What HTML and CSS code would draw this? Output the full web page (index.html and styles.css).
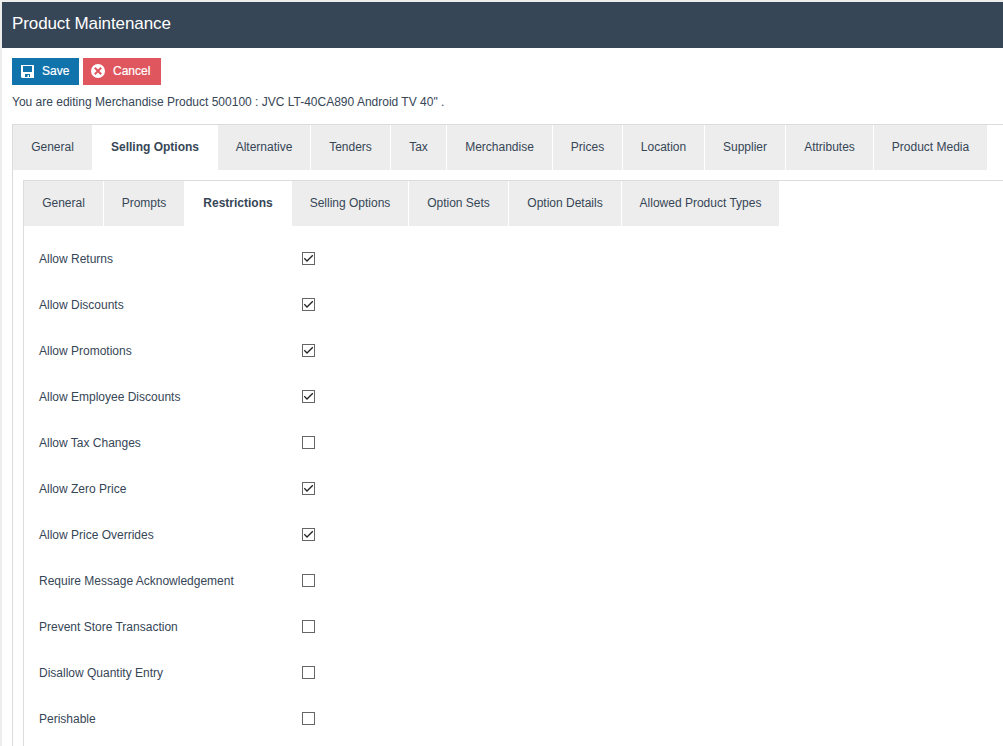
FILE: index.html
```html
<!DOCTYPE html>
<html lang="en">
<head>
<meta charset="utf-8">
<title>Product Maintenance</title>
<link rel="stylesheet" href="styles.css">
</head>
<body>
<div class="page">
  <header class="header"><h1 class="title">Product Maintenance</h1></header>
  <main class="content">
    <div class="actions">
      <button class="btn btn-save" type="button">
        <svg width="13" height="13" viewBox="0 0 13 13"><path fill="#fff" fill-rule="evenodd" d="M0 0H13V13H1L0 12ZM2 1V7H11V1ZM4 9V12H9V9Z"/><path fill="#fff" d="M6.500 10H8V12H6.500Z"/></svg>
        <span class="save-label">Save</span>
      </button>
      <button class="btn btn-cancel" type="button">
        <svg class="cancel-icon" width="14" height="14" viewBox="0 0 14 14"><circle cx="7" cy="7" r="7" fill="#fff"/><path d="M3.800 3.800L10.200 10.200M10.200 3.800L3.800 10.200" stroke="#e0565e" stroke-width="2"/></svg>
        <span class="cancel-label">Cancel</span>
      </button>
    </div>
    <p class="status">You are editing Merchandise Product 500100 : JVC LT-40CA890 Android TV 40" .</p>
    <section class="panel panel-outer">
      <nav class="tabs tabs-main">
        <a class="tab">General</a><a class="tab active">Selling Options</a><a class="tab">Alternative</a><a class="tab">Tenders</a><a class="tab">Tax</a><a class="tab">Merchandise</a><a class="tab">Prices</a><a class="tab">Location</a><a class="tab">Supplier</a><a class="tab">Attributes</a><a class="tab">Product Media</a>
      </nav>
      <section class="panel panel-inner">
        <nav class="tabs tabs-sub">
          <a class="tab">General</a><a class="tab">Prompts</a><a class="tab active">Restrictions</a><a class="tab">Selling Options</a><a class="tab">Option Sets</a><a class="tab">Option Details</a><a class="tab">Allowed Product Types</a>
        </nav>
        <form class="options">
          <label class="row"><span class="name">Allow Returns</span><input class="check" type="checkbox" checked></label>
          <label class="row"><span class="name">Allow Discounts</span><input class="check" type="checkbox" checked></label>
          <label class="row"><span class="name">Allow Promotions</span><input class="check" type="checkbox" checked></label>
          <label class="row"><span class="name">Allow Employee Discounts</span><input class="check" type="checkbox" checked></label>
          <label class="row"><span class="name">Allow Tax Changes</span><input class="check" type="checkbox"></label>
          <label class="row"><span class="name">Allow Zero Price</span><input class="check" type="checkbox" checked></label>
          <label class="row"><span class="name">Allow Price Overrides</span><input class="check" type="checkbox" checked></label>
          <label class="row"><span class="name">Require Message Acknowledgement</span><input class="check" type="checkbox"></label>
          <label class="row"><span class="name">Prevent Store Transaction</span><input class="check" type="checkbox"></label>
          <label class="row"><span class="name">Disallow Quantity Entry</span><input class="check" type="checkbox"></label>
          <label class="row"><span class="name">Perishable</span><input class="check" type="checkbox"></label>
        </form>
      </section>
    </section>
  </main>
</div>
</body>
</html>
```
FILE: styles.css
```css
* { box-sizing: border-box; }
body {
  margin: 0;
  height: 746px;
  overflow: hidden;
  padding: 2px 0 0 2px;
  background: #ededed;
  color: #364656;
  font: 12px/16px "Liberation Sans", Arial, sans-serif;
}
.page { height: 744px; background: #fff; overflow: hidden; }
.header {
  height: 46px;
  padding: 0 10px;
  display: flex;
  align-items: center;
  background: #364656;
}
.title { margin: 0 0 3px; font-size: 17px; line-height: 20px; font-weight: 400; color: #fff; letter-spacing: -0.1px; }
.content { padding: 10px 0 0 10px; }
.actions { display: flex; gap: 4px; }
.btn {
  display: flex;
  align-items: center;
  height: 27px;
  border: 0;
  padding: 0 0 0 9px;
  color: #fff;
  font: 12px/16px "Liberation Sans", Arial, sans-serif;
  -webkit-text-stroke: 0.2px #fff;
}
.btn-save { width: 67px; gap: 8px; background: #1173ac; }
.btn-cancel { width: 78px; padding-left: 8px; gap: 8px; background: #e0565e; }
.cancel-icon { margin-bottom: 1px; }
.save-label, .cancel-label { margin-bottom: 2px; }
.status { margin: 9px 0 13px; height: 17px; white-space: nowrap; }
.panel { border: 1px solid #dcdcdc; border-width: 1px 0 0 1px; }
.panel-outer { height: 640px; }
.panel-inner { height: 580px; margin: 10px 0 0 10px; }
.tabs { display: grid; column-gap: 1px; height: 45px; }
.tabs-main { grid-template-columns: 79px 124px 92px 79px 55px 105px 69px 81px 80px 87px 113px; }
.tabs-sub { grid-template-columns: 79px 80px 106px 116px 99px 112px 157px; }
.tab {
  display: flex;
  align-items: center;
  justify-content: center;
  padding-bottom: 1px;
  background: #ededed;
  white-space: nowrap;
}
.tab.active { background: #fff; font-weight: 700; }
.options { padding: 10px 0 0 15px; }
.row { display: grid; grid-template-columns: 263px 13px; align-items: center; height: 46px; }
.check {
  appearance: none;
  width: 13px;
  height: 13px;
  margin: 0 0 1px;
  border: 1px solid #666;
  background: #fff;
}
.check:checked {
  background: url("data:image/svg+xml,%3Csvg xmlns='http://www.w3.org/2000/svg' viewBox='0 0 11 11'%3E%3Cpath d='M1.300 5.300L4 8L9.800 2.200' fill='none' stroke='%23222' stroke-width='1.300'/%3E%3C/svg%3E") center / 11px 11px;
}
```
